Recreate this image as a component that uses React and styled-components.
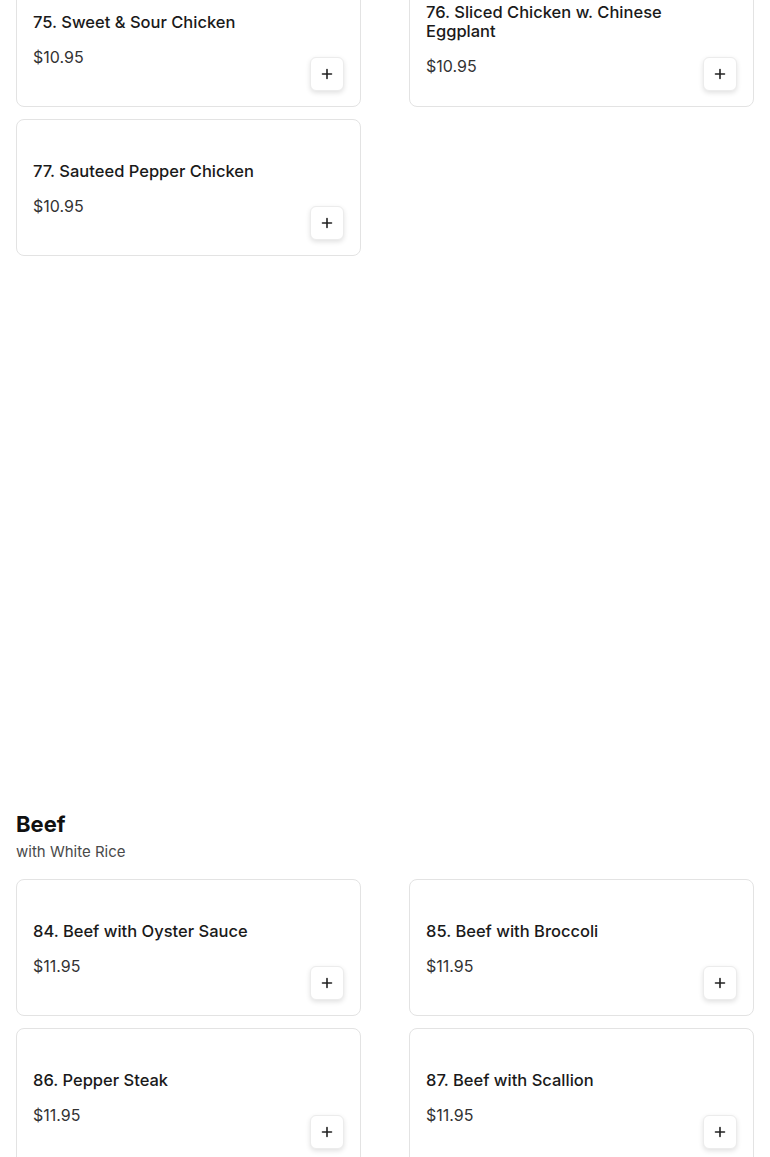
import React from 'react';
import styled, { createGlobalStyle } from 'styled-components';

const GlobalStyle = createGlobalStyle`
    body {
        margin: 0;
        background: #ffffff;
        font-family: "Inter", "Noto Sans", sans-serif;
        color: #1a1a1a;
    }
`;

const Page = styled.div`
    padding: 0 16px;
    margin-top: -30px;
`;

const Section = styled.section`
    margin-bottom: ${({ spaceAfter }) => spaceAfter || 0}px;
`;

const Heading = styled.h2`
    margin: 0;
    font-size: 22px;
    line-height: 28px;
    font-weight: 700;
    color: #111;
`;

const Subtitle = styled.p`
    margin: 4px 0 17px;
    font-size: 15px;
    line-height: 20px;
    color: #4a4a4a;
`;

const Grid = styled.div`
    display: grid;
    grid-template-columns: 1fr 1fr;
    column-gap: 48px;
    row-gap: 12px;
`;

const Card = styled.div`
    position: relative;
    height: 137px;
    box-sizing: border-box;
    border: 1px solid #e3e3e3;
    border-radius: 8px;
    padding: 2px 40px 0 16px;
    display: flex;
    flex-direction: column;
    justify-content: center;
    background: #fff;
`;

const Title = styled.div`
    font-size: 16.5px;
    line-height: 19px;
    font-weight: 500;
    color: #1a1a1a;
`;

const Price = styled.div`
    margin-top: 15px;
    font-size: 16px;
    line-height: 20px;
    color: #333;
`;

const AddButton = styled.button`
    position: absolute;
    right: 16px;
    bottom: 15px;
    width: 34px;
    height: 34px;
    padding: 0;
    border: 1px solid #ececec;
    border-radius: 6px;
    background: #fff;
    box-shadow: 0 2px 5px rgba(0, 0, 0, 0.12);
    display: flex;
    align-items: center;
    justify-content: center;
    cursor: pointer;
`;

const PlusIcon = () => (
    <svg width="12" height="12" viewBox="0 0 12 12">
        <path d="M6 1.5v9M1.5 6h9" stroke="#222" strokeWidth="1.6" strokeLinecap="round" />
    </svg>
);

const chicken = [
    { name: '75. Sweet & Sour Chicken', price: '$10.95' },
    { name: '76. Sliced Chicken w. Chinese Eggplant', price: '$10.95' },
    { name: '77. Sauteed Pepper Chicken', price: '$10.95' },
];

const beef = [
    { name: '84. Beef with Oyster Sauce', price: '$11.95' },
    { name: '85. Beef with Broccoli', price: '$11.95' },
    { name: '86. Pepper Steak', price: '$11.95' },
    { name: '87. Beef with Scallion', price: '$11.95' },
];

const MenuItem = ({ item }) => (
    <Card>
        <Title>{item.name}</Title>
        <Price>{item.price}</Price>
        <AddButton aria-label={`Add ${item.name}`}>
            <PlusIcon />
        </AddButton>
    </Card>
);

export default function App() {
    return (
        <>
            <GlobalStyle />
            <Page>
                <Section spaceAfter={554}>
                    <Grid>
                        {chicken.map(item => <MenuItem key={item.name} item={item} />)}
                    </Grid>
                </Section>
                <Section>
                    <Heading>Beef</Heading>
                    <Subtitle>with White Rice</Subtitle>
                    <Grid>
                        {beef.map(item => <MenuItem key={item.name} item={item} />)}
                    </Grid>
                </Section>
            </Page>
        </>
    );
}
